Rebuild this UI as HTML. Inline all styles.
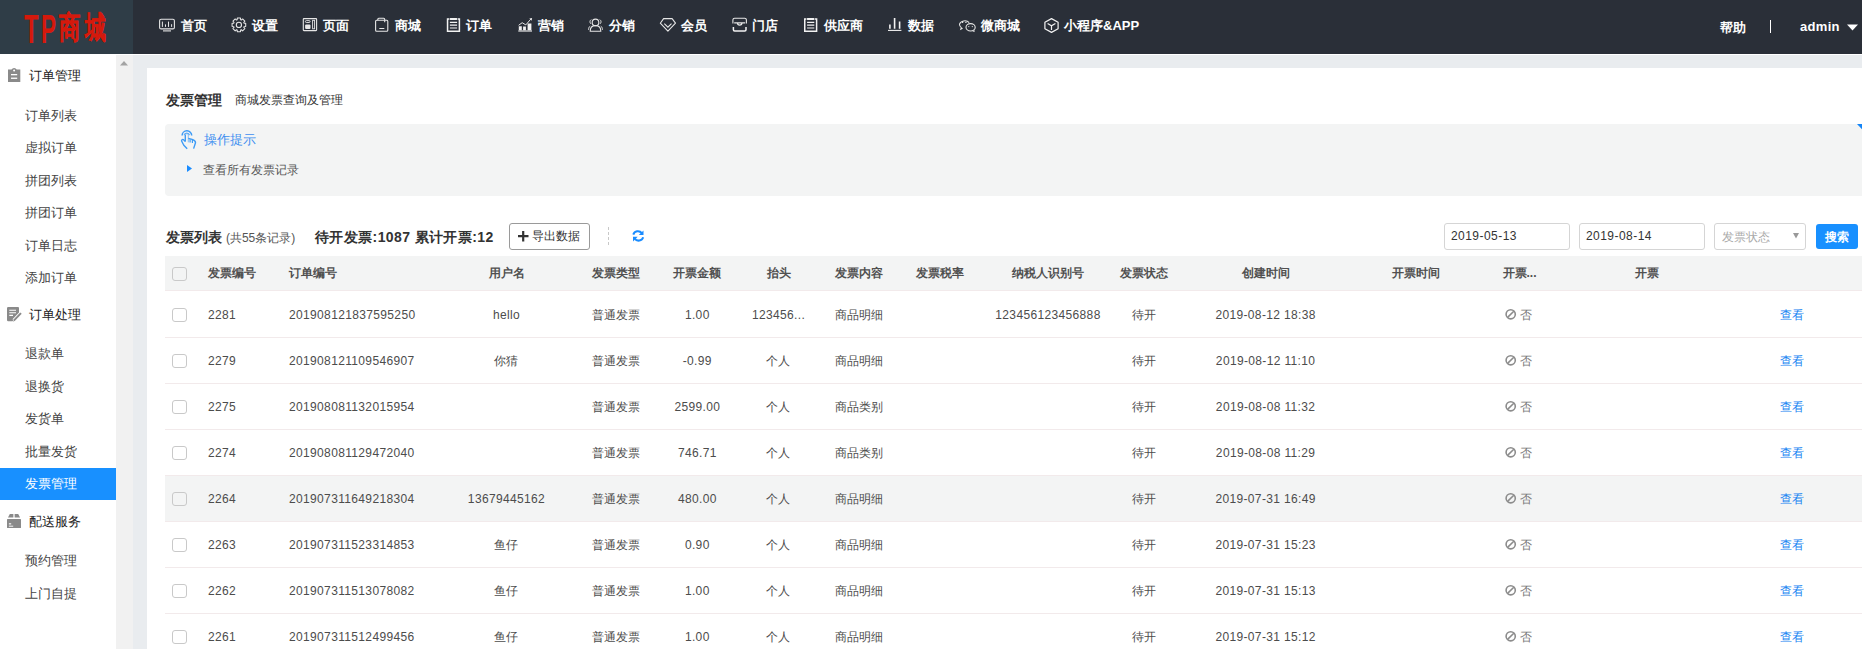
<!DOCTYPE html><html><head><meta charset="utf-8"><style>
*{margin:0;padding:0;box-sizing:border-box}
html,body{width:1862px;height:649px;overflow:hidden;background:#fff;font-family:"Liberation Sans",sans-serif;font-size:12px;color:#4c4c4c}
.a{position:absolute;white-space:nowrap}
svg{position:absolute;overflow:visible}
#hdr{position:absolute;left:0;top:0;width:1862px;height:54px;background:#2a2f38}
#logo{position:absolute;left:0;top:0;width:133px;height:54px;background:#2f3d47}
.nav{position:absolute;top:17px;height:18px;line-height:18px;font-size:13px;font-weight:bold;color:#fff;white-space:nowrap}
#side{position:absolute;left:0;top:54px;width:116px;height:595px;background:#fff}
#track{position:absolute;left:116px;top:55px;width:17px;height:594px;background:#f1f1f1}
#cbg{position:absolute;left:133px;top:55px;width:1729px;height:594px;background:#e9ecef}
#panel{position:absolute;left:147px;top:68px;width:1715px;height:581px;background:#fff}
.sec{position:absolute;left:29px;font-size:13px;color:#222;font-weight:500;line-height:18px;white-space:nowrap}
.si{position:absolute;left:25px;font-size:13px;color:#444;line-height:18px;white-space:nowrap}
</style></head><body>
<div id="hdr"></div><div id="logo"></div><div id="side"></div><div id="track"></div><div id="cbg"></div><div id="panel"></div>
<div class="nav" style="left:181px">首页</div>
<div class="nav" style="left:252px">设置</div>
<div class="nav" style="left:323px">页面</div>
<div class="nav" style="left:395px">商城</div>
<div class="nav" style="left:466px">订单</div>
<div class="nav" style="left:538px">营销</div>
<div class="nav" style="left:609px">分销</div>
<div class="nav" style="left:681px">会员</div>
<div class="nav" style="left:752px">门店</div>
<div class="nav" style="left:824px">供应商</div>
<div class="nav" style="left:908px">数据</div>
<div class="nav" style="left:981px">微商城</div>
<div class="nav" style="left:1064px">小程序&amp;APP</div>
<svg width="1862" height="54" style="left:0;top:0" viewBox="0 0 1862 54"><rect x="159.6" y="19.3" width="14.8" height="9.6" rx="1.5" fill="none" stroke="#e6e6e6" stroke-width="1.1"/><path d="M163 30.9h8" fill="none" stroke="#e6e6e6" stroke-width="1.1"/><path d="M162.4 21.6v5.3M165.5 24.4v2.5M168.5 21.6v5.3M171.6 24.2v2.7" fill="none" stroke="#e6e6e6" stroke-width="1"/><path d="M245.72 23.30 L245.72 26.50 L244.01 26.65 L243.75 27.28 L244.85 28.59 L242.59 30.85 L241.28 29.75 L240.65 30.01 L240.50 31.72 L237.30 31.72 L237.15 30.01 L236.52 29.75 L235.21 30.85 L232.95 28.59 L234.05 27.28 L233.79 26.65 L232.08 26.50 L232.08 23.30 L233.79 23.15 L234.05 22.52 L232.95 21.21 L235.21 18.95 L236.52 20.05 L237.15 19.79 L237.30 18.08 L240.50 18.08 L240.65 19.79 L241.28 20.05 L242.59 18.95 L244.85 21.21 L243.75 22.52 L244.01 23.15Z" fill="none" stroke="#e6e6e6" stroke-width="1.05" stroke-linejoin="round"/><circle cx="238.9" cy="24.9" r="2.6" fill="none" stroke="#e6e6e6" stroke-width="1.1"/><rect x="303.3" y="18.6" width="13.3" height="12" rx=".6" fill="none" stroke="#e6e6e6" stroke-width="1.1"/><rect x="305.4" y="20.6" width="4.7" height="1.9" rx=".95" fill="none" stroke="#e6e6e6" stroke-width="0.9"/><rect x="305.1" y="24.6" width="5.4" height="4.4" rx="1" fill="#e6e6e6"/><rect x="312.6" y="20.3" width="2" height="8.5" fill="none" stroke="#e6e6e6" stroke-width="0.9"/><path d="M375.6 21.3a1 1 0 0 1 1-1h10.2a1 1 0 0 1 1 1v9a1 1 0 0 1-1 1h-10.2a1 1 0 0 1-1-1z" fill="none" stroke="#e6e6e6" stroke-width="1.1"/><path d="M377.8 20.3v-1a1 1 0 0 1 1-1h4.9a1 1 0 0 1 1 1v3" fill="none" stroke="#e6e6e6" stroke-width="1.1"/><path d="M379.3 28.5h5" fill="none" stroke="#e6e6e6" stroke-width="1"/><path d="M449.1 18.9H447.55V31.2H459.40000000000003V18.9H457.8" fill="none" stroke="#f2f2f2" stroke-width="1.5"/><rect x="449.5" y="18" width="7.9" height="1.9" rx=".9" fill="#f2f2f2"/><path d="M449.90000000000003 22.4h7.2M449.90000000000003 25.2h7.2M449.90000000000003 28h7.2" fill="none" stroke="#f2f2f2" stroke-width="1.2"/><path d="M806.3 18.9H804.75V31.2H816.6V18.9H815" fill="none" stroke="#f2f2f2" stroke-width="1.5"/><rect x="806.7" y="18" width="7.9" height="1.9" rx=".9" fill="#f2f2f2"/><path d="M807.1 22.4h7.2M807.1 25.2h7.2M807.1 28h7.2" fill="none" stroke="#f2f2f2" stroke-width="1.2"/><path d="M518.3 31h13.7" fill="none" stroke="#e6e6e6" stroke-width="1.2"/><path d="M518.6 25.3l3.6-2.6 3.6 2.2 5.2-6" fill="none" stroke="#e6e6e6" stroke-width="1"/><path d="M529.3 18.5l2.8-.5-.4 2.8z" fill="#e6e6e6"/><path d="M518.8 26.3h3v4h-3zM523.1 26.5h2.8v3.8h-2.8zM527.6 23.6h3.8v6.7h-3.8z" fill="#f2f2f2"/><circle cx="595.5" cy="22.4" r="3.3" fill="none" stroke="#e6e6e6" stroke-width="1.1"/><path d="M590.2 31.2c0-3.5 2.2-5.6 5.3-5.6s5.3 2.1 5.3 5.6z" fill="none" stroke="#e6e6e6" stroke-width="1.1"/><path d="M591.2 19.6a2.6 2.6 0 0 0-.3 4.2M599.8 19.6a2.6 2.6 0 0 1 .3 4.2M588.6 29.8c0-1.8.5-3 1.6-3.7M602.4 29.8c0-1.8-.5-3-1.6-3.7" fill="none" stroke="#e6e6e6" stroke-width="1"/><path d="M663.6 18.6h8.5l3.4 4.6-7.6 8-7.6-8z" fill="none" stroke="#e6e6e6" stroke-width="1.1" stroke-linejoin="round"/><path d="M664.3 23.6l3.6 3.6 3.6-3.6" fill="none" stroke="#e6e6e6" stroke-width="1.1"/><path d="M732.9 23.5v-3.6a1.7 1.7 0 0 1 1.7-1.6h10.1a1.7 1.7 0 0 1 1.7 1.6v3.6" fill="none" stroke="#e6e6e6" stroke-width="1.1"/><path d="M733.4 27v2.7a1.2 1.2 0 0 0 1.2 1.2h10.2a1.2 1.2 0 0 0 1.2-1.2V27" fill="none" stroke="#f2f2f2" stroke-width="1.5"/><path d="M734.2 22.8h11M737.4 22.8a2.3 2.3 0 0 0 4.6 0" fill="none" stroke="#e6e6e6" stroke-width="1.2"/><path d="M888 30.4h13.4" fill="none" stroke="#f2f2f2" stroke-width="1.1"/><path d="M889.9 24.4v4.4M894.6 18v10.8M899.6 21.5v7.3" fill="none" stroke="#f2f2f2" stroke-width="1.6"/><path d="M969.2 22.6a5.5 4.5 0 0 0-9.7 1.6c0 1.4.7 2.6 1.8 3.4l-.5 1.5 1.8-.9" fill="none" stroke="#e6e6e6" stroke-width="1.05"/><ellipse cx="970.6" cy="27.3" rx="4.6" ry="3.7" fill="none" stroke="#e6e6e6" stroke-width="1.1"/><path d="M972.6 30.9l1.7.6-.4-1.4" fill="none" stroke="#e6e6e6" stroke-width="0.9"/><circle cx="962.6" cy="22.4" r=".7" fill="#e6e6e6"/><circle cx="965.9" cy="22.4" r=".7" fill="#e6e6e6"/><circle cx="968.8" cy="26.6" r=".6" fill="#e6e6e6"/><circle cx="972.3" cy="26.6" r=".6" fill="#e6e6e6"/><path d="M1051.5 18.6l6.6 3.6v6.6l-6.6 3.6-6.6-3.6v-6.6z" fill="none" stroke="#f2f2f2" stroke-width="1.2" stroke-linejoin="round"/><path d="M1047.6 23.4l3.9 2.3 3.9-2.3M1051.5 25.7v4.4" fill="none" stroke="#f2f2f2" stroke-width="1.2"/></svg>
<div class="nav" style="left:1720px;top:19px;font-weight:bold">帮助</div>
<div class="a" style="left:1770px;top:20px;width:1px;height:13px;background:#fff"></div>
<div class="nav" style="left:1800px;top:18px;font-size:13px;letter-spacing:.3px">admin</div>
<svg width="12" height="8" style="left:1847px;top:24px"><path d="M0 .5h11l-5.5 6z" fill="#fff"/></svg>
<div class="a" style="left:24px;top:8px;font:bold 39px/39px 'Liberation Sans',sans-serif;color:#d5190c;transform:scale(.61,1.05);transform-origin:0 0">T</div>
<div class="a" style="left:41px;top:8px;font:bold 39px/39px 'Liberation Sans',sans-serif;color:#d5190c;transform:scale(.58,1.05);transform-origin:0 0">P</div>
<div class="a" style="left:59px;top:12px;font:900 24px/24px 'Liberation Sans',sans-serif;color:#d5190c;-webkit-text-stroke:.35px #d5190c;transform:scale(.9,1.31);transform-origin:0 0">商</div>
<div class="a" style="left:85px;top:12px;font:900 24px/24px 'Liberation Sans',sans-serif;color:#d5190c;-webkit-text-stroke:.35px #d5190c;transform:scale(.88,1.31);transform-origin:0 0">城</div>
<svg width="14" height="16" style="left:8px;top:68px" viewBox="0 0 14 16"><path d="M0 1.5h3.5A3 3 0 0 1 6.1 0h0A3 3 0 0 1 8.7 1.5H12.3V14H0z" fill="#8a8a8a" transform="translate(0 0)"/><circle cx="6.1" cy="2.4" r="1" fill="#fff"/><rect x="3" y="6" width="6.2" height="1.3" fill="#fff"/><rect x="3" y="9.6" width="6.2" height="1.3" fill="#fff"/></svg>
<svg width="16" height="16" style="left:7px;top:307px" viewBox="0 0 16 16"><path d="M1.2 0h9.8a1 1 0 0 1 1 1v5.8L5.5 14.3H1.2a1.2 1.2 0 0 1-1.2-1.2V1.2A1.2 1.2 0 0 1 1.2 0z" fill="#8a8a8a"/><path d="M2.3 3.2h6.7M2.3 5.7h6.7M2.3 8.4h3.7" stroke="#fff" stroke-width="1.1"/><path d="M14 6.1l-7.2 7.5" stroke="#fff" stroke-width="3.6"/><path d="M14 6.1l-7.2 7.5" stroke="#8a8a8a" stroke-width="2"/><path d="M6.2 14.1l-.3 .8 .9-.3" fill="#8a8a8a"/></svg>
<svg width="16" height="16" style="left:7px;top:514px" viewBox="0 0 16 16"><path d="M2.8 0h3.6v3.6H1z" fill="#8a8a8a"/><path d="M7.6 0h3.6l1.9 3.6H7.6z" fill="#8a8a8a"/><rect x="0" y="5" width="14" height="9" rx=".6" fill="#8a8a8a"/><rect x="1.9" y="9" width="2.3" height="1.6" fill="#ddd"/><rect x="1.9" y="11.6" width="4.3" height="1.3" fill="#ddd"/></svg>
<div class="sec" style="top:67px">订单管理</div>
<div class="sec" style="top:305.5px">订单处理</div>
<div class="sec" style="top:512.5px">配送服务</div>
<div class="a" style="left:0;top:468px;width:116px;height:32px;background:#1890ff"></div>
<div class="si" style="top:106.5px">订单列表</div>
<div class="si" style="top:139px">虚拟订单</div>
<div class="si" style="top:171.5px">拼团列表</div>
<div class="si" style="top:204px">拼团订单</div>
<div class="si" style="top:236.5px">订单日志</div>
<div class="si" style="top:269px">添加订单</div>
<div class="si" style="top:345px">退款单</div>
<div class="si" style="top:377.5px">退换货</div>
<div class="si" style="top:410px">发货单</div>
<div class="si" style="top:442.5px">批量发货</div>
<div class="si" style="top:475px;color:#fff">发票管理</div>
<div class="si" style="top:552px">预约管理</div>
<div class="si" style="top:584.5px">上门自提</div>
<svg width="10" height="6" style="left:120px;top:60px"><path d="M0 5.5h8L4 1z" fill="#a3a3a3"/></svg>
<div class="a" style="left:166px;top:91px;font-size:14px;font-weight:bold;color:#333;line-height:18px">发票管理</div>
<div class="a" style="left:235px;top:92px;font-size:12px;color:#333;line-height:16px">商城发票查询及管理</div>
<div class="a" style="left:165px;top:124px;width:1697px;height:72px;background:#f3f4f4;border-radius:4px 0 0 4px"></div>
<svg width="6" height="6" style="left:1857px;top:124px"><path d="M0 0h5v5.2z" fill="#1485f7"/></svg>
<svg width="18" height="20" style="left:180px;top:130px" viewBox="0 0 18 20"><path d="M2.1 5.6A4.8 4.8 0 0 1 11.7 5.6" fill="none" stroke="#3d9bf5" stroke-width="1.5"/><path d="M4 5.2a2.9 2.9 0 0 1 5.6 0" fill="none" stroke="#3d9bf5" stroke-width="1.1" opacity=".8"/><path d="M5.3 3.8h3v8.6" fill="none" stroke="#3d9bf5" stroke-width="1" opacity=".6"/><path d="M5.3 11.6V4.6M8.3 8.4l3.8 1c1.8.6 3.6 1.2 3.4 3.4l-1.9 5.8" fill="none" stroke="#3d9bf5" stroke-width="1.4" stroke-linejoin="round"/><path d="M10.1 9.2v3.4M12.4 9.8v3.2" stroke="#3d9bf5" stroke-width="1.2"/><path d="M5.4 11.5L3.3 9.6a1.2 1.2 0 0 0-1.7 1.4l2.2 4.2 3.4 3.5" fill="none" stroke="#3d9bf5" stroke-width="1.4" stroke-linejoin="round"/></svg>
<div class="a" style="left:204px;top:131px;font-size:13px;color:#3d8ef0;line-height:17px">操作提示</div>
<svg width="6" height="8" style="left:187px;top:165px"><path d="M0 0l5 3.5L0 7z" fill="#1a8cff"/></svg>
<div class="a" style="left:203px;top:162px;font-size:12px;color:#555;line-height:16px">查看所有发票记录</div>
<div class="a" style="left:166px;top:228px;font-size:14px;font-weight:bold;color:#333;line-height:18px">发票列表 <span style="font-size:12px;font-weight:normal;color:#555">(共55条记录)</span></div>
<div class="a" style="left:315px;top:228px;font-size:14px;font-weight:bold;color:#333;line-height:18px;letter-spacing:.4px">待开发票:1087 累计开票:12</div>
<div class="a" style="left:509px;top:223px;width:81px;height:27px;border:1px solid #9a9a9a;border-radius:3px;background:#fff"></div>
<svg width="12" height="12" style="left:518px;top:231px"><path d="M5.2 0v10.5M0 5.2h10.5" stroke="#333" stroke-width="2.2"/></svg>
<div class="a" style="left:532px;top:228px;font-size:12px;color:#333;line-height:16px">导出数据</div>
<div class="a" style="left:608px;top:227px;width:1px;height:18px;border-left:1px dashed #c8c8c8"></div>
<svg width="13" height="12" style="left:632px;top:230px" viewBox="0 0 13 12"><path d="M1.3 4.6A4.8 4.8 0 0 1 9.8 3.2" fill="none" stroke="#1a8cff" stroke-width="2"/><path d="M11.5 0.4v4.7H6.8z" fill="#1a8cff"/><path d="M11.2 7.2A4.8 4.8 0 0 1 2.7 8.6" fill="none" stroke="#1a8cff" stroke-width="2"/><path d="M1 11.5V6.8h4.7z" fill="#1a8cff"/></svg>
<div class="a" style="left:1444px;top:223px;width:126px;height:27px;border:1px solid #d5d5d5;border-radius:3px;background:#fff"></div>
<div class="a" style="left:1451px;top:228px;font-size:12px;color:#333;line-height:16px;letter-spacing:.45px">2019-05-13</div>
<div class="a" style="left:1579px;top:223px;width:126px;height:27px;border:1px solid #d5d5d5;border-radius:3px;background:#fff"></div>
<div class="a" style="left:1586px;top:228px;font-size:12px;color:#333;line-height:16px;letter-spacing:.45px">2019-08-14</div>
<div class="a" style="left:1714px;top:223px;width:92px;height:27px;border:1px solid #d5d5d5;border-radius:3px;background:#fff"></div>
<div class="a" style="left:1722px;top:229px;font-size:12px;color:#aaa;line-height:16px">发票状态</div>
<svg width="8" height="7" style="left:1793px;top:233px"><path d="M0 0h6L3 5.6z" fill="#999"/></svg>
<div class="a" style="left:1816px;top:224px;width:42px;height:25px;border-radius:3px;background:#1890ff"></div>
<div class="a" style="left:1825px;top:229px;font-size:12px;color:#fff;line-height:16px;font-weight:bold">搜索</div>
<div class="a" style="left:165px;top:256px;width:1697px;height:34px;background:#f3f4f4"></div>
<div class="a" style="left:165px;top:290px;width:1697px;height:1px;background:#f2eaeb"></div>
<div class="a" style="left:165px;top:337px;width:1697px;height:1px;background:#f2eaeb"></div>
<div class="a" style="left:165px;top:383px;width:1697px;height:1px;background:#f2eaeb"></div>
<div class="a" style="left:165px;top:429px;width:1697px;height:1px;background:#f2eaeb"></div>
<div class="a" style="left:165px;top:475px;width:1697px;height:1px;background:#f2eaeb"></div>
<div class="a" style="left:165px;top:521px;width:1697px;height:1px;background:#f2eaeb"></div>
<div class="a" style="left:165px;top:567px;width:1697px;height:1px;background:#f2eaeb"></div>
<div class="a" style="left:165px;top:613px;width:1697px;height:1px;background:#f2eaeb"></div>
<div class="a" style="left:165px;top:476px;width:1697px;height:45px;background:#f3f4f4"></div>
<div class="a" style="left:172px;top:267px;width:15px;height:14px;border:1px solid #c9c9c9;border-radius:3px;background:transparent"></div>
<div class="a" style="left:208px;top:265px;line-height:16px;color:#505050;font-weight:bold">发票编号</div>
<div class="a" style="left:289px;top:265px;line-height:16px;color:#505050;font-weight:bold">订单编号</div>
<div class="a" style="left:356.5px;width:300px;text-align:center;top:265px;line-height:16px;color:#505050;font-weight:bold">用户名</div>
<div class="a" style="left:466px;width:300px;text-align:center;top:265px;line-height:16px;color:#505050;font-weight:bold">发票类型</div>
<div class="a" style="left:547.3px;width:300px;text-align:center;top:265px;line-height:16px;color:#505050;font-weight:bold">开票金额</div>
<div class="a" style="left:628.5px;width:300px;text-align:center;top:265px;line-height:16px;color:#505050;font-weight:bold">抬头</div>
<div class="a" style="left:709.4px;width:300px;text-align:center;top:265px;line-height:16px;color:#505050;font-weight:bold">发票内容</div>
<div class="a" style="left:790px;width:300px;text-align:center;top:265px;line-height:16px;color:#505050;font-weight:bold">发票税率</div>
<div class="a" style="left:898px;width:300px;text-align:center;top:265px;line-height:16px;color:#505050;font-weight:bold">纳税人识别号</div>
<div class="a" style="left:994px;width:300px;text-align:center;top:265px;line-height:16px;color:#505050;font-weight:bold">发票状态</div>
<div class="a" style="left:1115.6px;width:300px;text-align:center;top:265px;line-height:16px;color:#505050;font-weight:bold">创建时间</div>
<div class="a" style="left:1265.6px;width:300px;text-align:center;top:265px;line-height:16px;color:#505050;font-weight:bold">开票时间</div>
<div class="a" style="left:1502.5px;top:265px;line-height:16px;color:#505050;font-weight:bold">开票...</div>
<div class="a" style="left:1497px;width:300px;text-align:center;top:265px;line-height:16px;color:#505050;font-weight:bold">开票</div>
<div class="a" style="left:172px;top:308px;width:15px;height:14px;border:1px solid #c9c9c9;border-radius:3px;background:transparent"></div>
<div class="a" style="left:208px;top:307px;line-height:16px;letter-spacing:.35px">2281</div>
<div class="a" style="left:289px;top:307px;line-height:16px;letter-spacing:.35px">201908121837595250</div>
<div class="a" style="left:356.5px;width:300px;text-align:center;top:307px;line-height:16px;letter-spacing:.35px">hello</div>
<div class="a" style="left:466px;width:300px;text-align:center;top:307px;line-height:16px;">普通发票</div>
<div class="a" style="left:547.3px;width:300px;text-align:center;top:307px;line-height:16px;letter-spacing:.35px">1.00</div>
<div class="a" style="left:628.5px;width:300px;text-align:center;top:307px;line-height:16px;letter-spacing:.35px">123456...</div>
<div class="a" style="left:709.4px;width:300px;text-align:center;top:307px;line-height:16px;">商品明细</div>
<div class="a" style="left:898px;width:300px;text-align:center;top:307px;line-height:16px;letter-spacing:.35px">123456123456888</div>
<div class="a" style="left:994px;width:300px;text-align:center;top:307px;line-height:16px;">待开</div>
<div class="a" style="left:1115.6px;width:300px;text-align:center;top:307px;line-height:16px;letter-spacing:.35px">2019-08-12 18:38</div>
<svg width="12" height="12" style="left:1505px;top:309px" viewBox="0 0 12 12"><circle cx="5.7" cy="5.3" r="4.6" fill="none" stroke="#8c8c8c" stroke-width="1.6"/><path d="M2.6 8.4l6.2-6.2" stroke="#8c8c8c" stroke-width="1.6"/></svg>
<div class="a" style="left:1519.5px;top:307px;line-height:16px;color:#777">否</div>
<div class="a" style="left:1780px;top:307px;line-height:16px;color:#1683f2;font-weight:500">查看</div>
<div class="a" style="left:172px;top:354px;width:15px;height:14px;border:1px solid #c9c9c9;border-radius:3px;background:transparent"></div>
<div class="a" style="left:208px;top:353px;line-height:16px;letter-spacing:.35px">2279</div>
<div class="a" style="left:289px;top:353px;line-height:16px;letter-spacing:.35px">201908121109546907</div>
<div class="a" style="left:356.5px;width:300px;text-align:center;top:353px;line-height:16px;letter-spacing:.35px">你猜</div>
<div class="a" style="left:466px;width:300px;text-align:center;top:353px;line-height:16px;">普通发票</div>
<div class="a" style="left:547.3px;width:300px;text-align:center;top:353px;line-height:16px;letter-spacing:.35px">-0.99</div>
<div class="a" style="left:628.5px;width:300px;text-align:center;top:353px;line-height:16px;letter-spacing:.35px">个人</div>
<div class="a" style="left:709.4px;width:300px;text-align:center;top:353px;line-height:16px;">商品明细</div>
<div class="a" style="left:898px;width:300px;text-align:center;top:353px;line-height:16px;letter-spacing:.35px"></div>
<div class="a" style="left:994px;width:300px;text-align:center;top:353px;line-height:16px;">待开</div>
<div class="a" style="left:1115.6px;width:300px;text-align:center;top:353px;line-height:16px;letter-spacing:.35px">2019-08-12 11:10</div>
<svg width="12" height="12" style="left:1505px;top:355px" viewBox="0 0 12 12"><circle cx="5.7" cy="5.3" r="4.6" fill="none" stroke="#8c8c8c" stroke-width="1.6"/><path d="M2.6 8.4l6.2-6.2" stroke="#8c8c8c" stroke-width="1.6"/></svg>
<div class="a" style="left:1519.5px;top:353px;line-height:16px;color:#777">否</div>
<div class="a" style="left:1780px;top:353px;line-height:16px;color:#1683f2;font-weight:500">查看</div>
<div class="a" style="left:172px;top:400px;width:15px;height:14px;border:1px solid #c9c9c9;border-radius:3px;background:transparent"></div>
<div class="a" style="left:208px;top:399px;line-height:16px;letter-spacing:.35px">2275</div>
<div class="a" style="left:289px;top:399px;line-height:16px;letter-spacing:.35px">201908081132015954</div>
<div class="a" style="left:356.5px;width:300px;text-align:center;top:399px;line-height:16px;letter-spacing:.35px"></div>
<div class="a" style="left:466px;width:300px;text-align:center;top:399px;line-height:16px;">普通发票</div>
<div class="a" style="left:547.3px;width:300px;text-align:center;top:399px;line-height:16px;letter-spacing:.35px">2599.00</div>
<div class="a" style="left:628.5px;width:300px;text-align:center;top:399px;line-height:16px;letter-spacing:.35px">个人</div>
<div class="a" style="left:709.4px;width:300px;text-align:center;top:399px;line-height:16px;">商品类别</div>
<div class="a" style="left:898px;width:300px;text-align:center;top:399px;line-height:16px;letter-spacing:.35px"></div>
<div class="a" style="left:994px;width:300px;text-align:center;top:399px;line-height:16px;">待开</div>
<div class="a" style="left:1115.6px;width:300px;text-align:center;top:399px;line-height:16px;letter-spacing:.35px">2019-08-08 11:32</div>
<svg width="12" height="12" style="left:1505px;top:401px" viewBox="0 0 12 12"><circle cx="5.7" cy="5.3" r="4.6" fill="none" stroke="#8c8c8c" stroke-width="1.6"/><path d="M2.6 8.4l6.2-6.2" stroke="#8c8c8c" stroke-width="1.6"/></svg>
<div class="a" style="left:1519.5px;top:399px;line-height:16px;color:#777">否</div>
<div class="a" style="left:1780px;top:399px;line-height:16px;color:#1683f2;font-weight:500">查看</div>
<div class="a" style="left:172px;top:446px;width:15px;height:14px;border:1px solid #c9c9c9;border-radius:3px;background:transparent"></div>
<div class="a" style="left:208px;top:445px;line-height:16px;letter-spacing:.35px">2274</div>
<div class="a" style="left:289px;top:445px;line-height:16px;letter-spacing:.35px">201908081129472040</div>
<div class="a" style="left:356.5px;width:300px;text-align:center;top:445px;line-height:16px;letter-spacing:.35px"></div>
<div class="a" style="left:466px;width:300px;text-align:center;top:445px;line-height:16px;">普通发票</div>
<div class="a" style="left:547.3px;width:300px;text-align:center;top:445px;line-height:16px;letter-spacing:.35px">746.71</div>
<div class="a" style="left:628.5px;width:300px;text-align:center;top:445px;line-height:16px;letter-spacing:.35px">个人</div>
<div class="a" style="left:709.4px;width:300px;text-align:center;top:445px;line-height:16px;">商品类别</div>
<div class="a" style="left:898px;width:300px;text-align:center;top:445px;line-height:16px;letter-spacing:.35px"></div>
<div class="a" style="left:994px;width:300px;text-align:center;top:445px;line-height:16px;">待开</div>
<div class="a" style="left:1115.6px;width:300px;text-align:center;top:445px;line-height:16px;letter-spacing:.35px">2019-08-08 11:29</div>
<svg width="12" height="12" style="left:1505px;top:447px" viewBox="0 0 12 12"><circle cx="5.7" cy="5.3" r="4.6" fill="none" stroke="#8c8c8c" stroke-width="1.6"/><path d="M2.6 8.4l6.2-6.2" stroke="#8c8c8c" stroke-width="1.6"/></svg>
<div class="a" style="left:1519.5px;top:445px;line-height:16px;color:#777">否</div>
<div class="a" style="left:1780px;top:445px;line-height:16px;color:#1683f2;font-weight:500">查看</div>
<div class="a" style="left:172px;top:492px;width:15px;height:14px;border:1px solid #c9c9c9;border-radius:3px;background:transparent"></div>
<div class="a" style="left:208px;top:491px;line-height:16px;letter-spacing:.35px">2264</div>
<div class="a" style="left:289px;top:491px;line-height:16px;letter-spacing:.35px">201907311649218304</div>
<div class="a" style="left:356.5px;width:300px;text-align:center;top:491px;line-height:16px;letter-spacing:.35px">13679445162</div>
<div class="a" style="left:466px;width:300px;text-align:center;top:491px;line-height:16px;">普通发票</div>
<div class="a" style="left:547.3px;width:300px;text-align:center;top:491px;line-height:16px;letter-spacing:.35px">480.00</div>
<div class="a" style="left:628.5px;width:300px;text-align:center;top:491px;line-height:16px;letter-spacing:.35px">个人</div>
<div class="a" style="left:709.4px;width:300px;text-align:center;top:491px;line-height:16px;">商品明细</div>
<div class="a" style="left:898px;width:300px;text-align:center;top:491px;line-height:16px;letter-spacing:.35px"></div>
<div class="a" style="left:994px;width:300px;text-align:center;top:491px;line-height:16px;">待开</div>
<div class="a" style="left:1115.6px;width:300px;text-align:center;top:491px;line-height:16px;letter-spacing:.35px">2019-07-31 16:49</div>
<svg width="12" height="12" style="left:1505px;top:493px" viewBox="0 0 12 12"><circle cx="5.7" cy="5.3" r="4.6" fill="none" stroke="#8c8c8c" stroke-width="1.6"/><path d="M2.6 8.4l6.2-6.2" stroke="#8c8c8c" stroke-width="1.6"/></svg>
<div class="a" style="left:1519.5px;top:491px;line-height:16px;color:#777">否</div>
<div class="a" style="left:1780px;top:491px;line-height:16px;color:#1683f2;font-weight:500">查看</div>
<div class="a" style="left:172px;top:538px;width:15px;height:14px;border:1px solid #c9c9c9;border-radius:3px;background:transparent"></div>
<div class="a" style="left:208px;top:537px;line-height:16px;letter-spacing:.35px">2263</div>
<div class="a" style="left:289px;top:537px;line-height:16px;letter-spacing:.35px">201907311523314853</div>
<div class="a" style="left:356.5px;width:300px;text-align:center;top:537px;line-height:16px;letter-spacing:.35px">鱼仔</div>
<div class="a" style="left:466px;width:300px;text-align:center;top:537px;line-height:16px;">普通发票</div>
<div class="a" style="left:547.3px;width:300px;text-align:center;top:537px;line-height:16px;letter-spacing:.35px">0.90</div>
<div class="a" style="left:628.5px;width:300px;text-align:center;top:537px;line-height:16px;letter-spacing:.35px">个人</div>
<div class="a" style="left:709.4px;width:300px;text-align:center;top:537px;line-height:16px;">商品明细</div>
<div class="a" style="left:898px;width:300px;text-align:center;top:537px;line-height:16px;letter-spacing:.35px"></div>
<div class="a" style="left:994px;width:300px;text-align:center;top:537px;line-height:16px;">待开</div>
<div class="a" style="left:1115.6px;width:300px;text-align:center;top:537px;line-height:16px;letter-spacing:.35px">2019-07-31 15:23</div>
<svg width="12" height="12" style="left:1505px;top:539px" viewBox="0 0 12 12"><circle cx="5.7" cy="5.3" r="4.6" fill="none" stroke="#8c8c8c" stroke-width="1.6"/><path d="M2.6 8.4l6.2-6.2" stroke="#8c8c8c" stroke-width="1.6"/></svg>
<div class="a" style="left:1519.5px;top:537px;line-height:16px;color:#777">否</div>
<div class="a" style="left:1780px;top:537px;line-height:16px;color:#1683f2;font-weight:500">查看</div>
<div class="a" style="left:172px;top:584px;width:15px;height:14px;border:1px solid #c9c9c9;border-radius:3px;background:transparent"></div>
<div class="a" style="left:208px;top:583px;line-height:16px;letter-spacing:.35px">2262</div>
<div class="a" style="left:289px;top:583px;line-height:16px;letter-spacing:.35px">201907311513078082</div>
<div class="a" style="left:356.5px;width:300px;text-align:center;top:583px;line-height:16px;letter-spacing:.35px">鱼仔</div>
<div class="a" style="left:466px;width:300px;text-align:center;top:583px;line-height:16px;">普通发票</div>
<div class="a" style="left:547.3px;width:300px;text-align:center;top:583px;line-height:16px;letter-spacing:.35px">1.00</div>
<div class="a" style="left:628.5px;width:300px;text-align:center;top:583px;line-height:16px;letter-spacing:.35px">个人</div>
<div class="a" style="left:709.4px;width:300px;text-align:center;top:583px;line-height:16px;">商品明细</div>
<div class="a" style="left:898px;width:300px;text-align:center;top:583px;line-height:16px;letter-spacing:.35px"></div>
<div class="a" style="left:994px;width:300px;text-align:center;top:583px;line-height:16px;">待开</div>
<div class="a" style="left:1115.6px;width:300px;text-align:center;top:583px;line-height:16px;letter-spacing:.35px">2019-07-31 15:13</div>
<svg width="12" height="12" style="left:1505px;top:585px" viewBox="0 0 12 12"><circle cx="5.7" cy="5.3" r="4.6" fill="none" stroke="#8c8c8c" stroke-width="1.6"/><path d="M2.6 8.4l6.2-6.2" stroke="#8c8c8c" stroke-width="1.6"/></svg>
<div class="a" style="left:1519.5px;top:583px;line-height:16px;color:#777">否</div>
<div class="a" style="left:1780px;top:583px;line-height:16px;color:#1683f2;font-weight:500">查看</div>
<div class="a" style="left:172px;top:630px;width:15px;height:14px;border:1px solid #c9c9c9;border-radius:3px;background:transparent"></div>
<div class="a" style="left:208px;top:629px;line-height:16px;letter-spacing:.35px">2261</div>
<div class="a" style="left:289px;top:629px;line-height:16px;letter-spacing:.35px">201907311512499456</div>
<div class="a" style="left:356.5px;width:300px;text-align:center;top:629px;line-height:16px;letter-spacing:.35px">鱼仔</div>
<div class="a" style="left:466px;width:300px;text-align:center;top:629px;line-height:16px;">普通发票</div>
<div class="a" style="left:547.3px;width:300px;text-align:center;top:629px;line-height:16px;letter-spacing:.35px">1.00</div>
<div class="a" style="left:628.5px;width:300px;text-align:center;top:629px;line-height:16px;letter-spacing:.35px">个人</div>
<div class="a" style="left:709.4px;width:300px;text-align:center;top:629px;line-height:16px;">商品明细</div>
<div class="a" style="left:898px;width:300px;text-align:center;top:629px;line-height:16px;letter-spacing:.35px"></div>
<div class="a" style="left:994px;width:300px;text-align:center;top:629px;line-height:16px;">待开</div>
<div class="a" style="left:1115.6px;width:300px;text-align:center;top:629px;line-height:16px;letter-spacing:.35px">2019-07-31 15:12</div>
<svg width="12" height="12" style="left:1505px;top:631px" viewBox="0 0 12 12"><circle cx="5.7" cy="5.3" r="4.6" fill="none" stroke="#8c8c8c" stroke-width="1.6"/><path d="M2.6 8.4l6.2-6.2" stroke="#8c8c8c" stroke-width="1.6"/></svg>
<div class="a" style="left:1519.5px;top:629px;line-height:16px;color:#777">否</div>
<div class="a" style="left:1780px;top:629px;line-height:16px;color:#1683f2;font-weight:500">查看</div>
</body></html>
